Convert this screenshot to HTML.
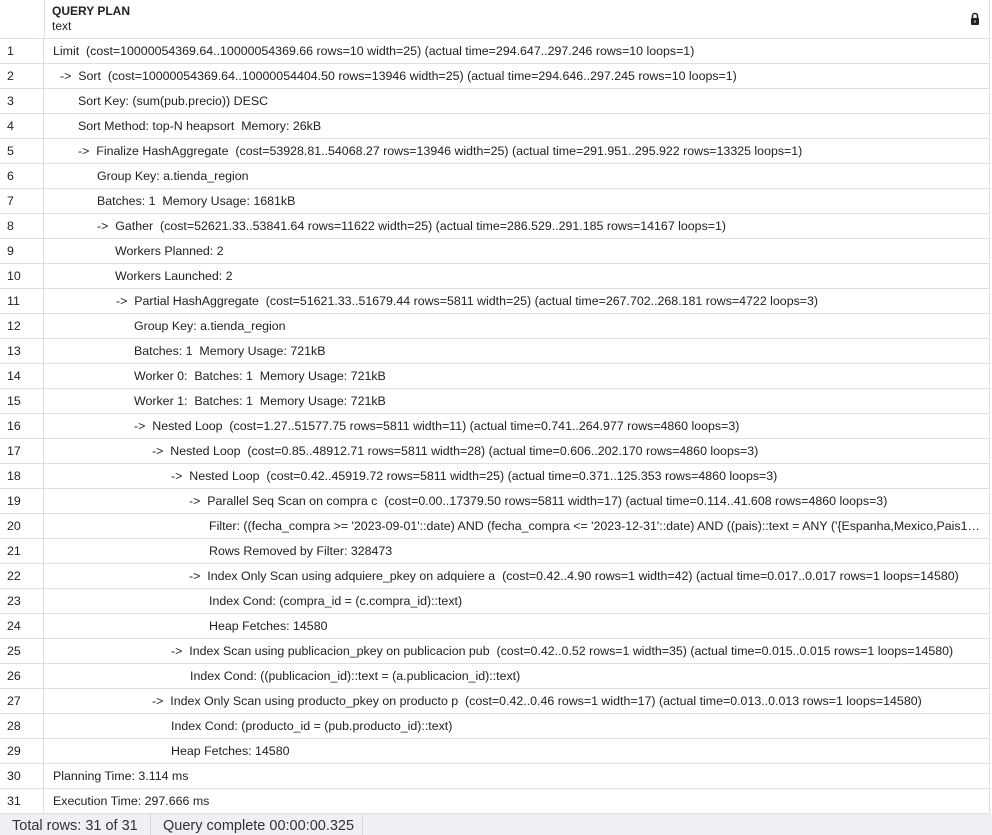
<!DOCTYPE html>
<html><head><meta charset="utf-8"><style>
body{margin:0;width:992px;height:835px;background:#fff;font-family:"Liberation Sans",sans-serif;font-size:12.4px;color:#222;overflow:hidden;position:relative}
.hdr{position:absolute;left:0;top:0;width:989px;height:38px;border-bottom:1px solid #dde0e6;border-right:1px solid #dde0e6}
.hdr .c0{position:absolute;left:0;top:0;width:44px;height:38px;border-right:1px solid #dde0e6}
.hdr .t1{position:absolute;left:52px;top:4px;font-weight:bold;font-size:12px}
.hdr .t2{position:absolute;left:52px;top:19px;font-size:12px}
.row{position:absolute;left:0;width:989px;height:24px;border-bottom:1px solid #dde0e6;border-right:1px solid #dde0e6}
.row .n{position:absolute;left:0;top:0;width:44px;height:25px;border-right:1px solid #dde0e6;box-sizing:border-box;padding-left:7px;line-height:25px}
.row .v{position:absolute;top:0;line-height:25px;white-space:pre;overflow:hidden;text-overflow:ellipsis;right:5px}
.foot{position:absolute;left:0;top:814px;width:992px;height:21px;background:#eef0f4;font-size:14.5px;color:#333}
.foot span{position:absolute;top:4px}
.sep{position:absolute;top:0;width:1px;height:21px;background:#d6d9df}
</style></head><body>
<div class="hdr"><div class="c0"></div><div class="t1">QUERY PLAN</div><div class="t2">text</div>
<svg style="position:absolute;left:970px;top:12px" width="10" height="13" viewBox="0 0 10 13"><path d="M2.5 6V4a2.5 2.5 0 0 1 5 0v2" fill="none" stroke="#222" stroke-width="1.6"/><rect x="1" y="6" width="8" height="7" rx="1" fill="#222"/><rect x="4.4" y="8.5" width="1.2" height="2" fill="#fff"/></svg></div>
<div id="rows"></div>
<div class="foot"><span style="left:12px">Total rows: 31 of 31</span><div class="sep" style="left:150px"></div><span style="left:163px">Query complete 00:00:00.325</span><div class="sep" style="left:362px"></div></div>
<script>
var d=[[53,"Limit  (cost=10000054369.64..10000054369.66 rows=10 width=25) (actual time=294.647..297.246 rows=10 loops=1)"],
[60,"->  Sort  (cost=10000054369.64..10000054404.50 rows=13946 width=25) (actual time=294.646..297.245 rows=10 loops=1)"],
[78,"Sort Key: (sum(pub.precio)) DESC"],
[78,"Sort Method: top-N heapsort  Memory: 26kB"],
[78,"->  Finalize HashAggregate  (cost=53928.81..54068.27 rows=13946 width=25) (actual time=291.951..295.922 rows=13325 loops=1)"],
[97,"Group Key: a.tienda_region"],
[97,"Batches: 1  Memory Usage: 1681kB"],
[97,"->  Gather  (cost=52621.33..53841.64 rows=11622 width=25) (actual time=286.529..291.185 rows=14167 loops=1)"],
[115,"Workers Planned: 2"],
[115,"Workers Launched: 2"],
[116,"->  Partial HashAggregate  (cost=51621.33..51679.44 rows=5811 width=25) (actual time=267.702..268.181 rows=4722 loops=3)"],
[134,"Group Key: a.tienda_region"],
[134,"Batches: 1  Memory Usage: 721kB"],
[134,"Worker 0:  Batches: 1  Memory Usage: 721kB"],
[134,"Worker 1:  Batches: 1  Memory Usage: 721kB"],
[134,"->  Nested Loop  (cost=1.27..51577.75 rows=5811 width=11) (actual time=0.741..264.977 rows=4860 loops=3)"],
[152,"->  Nested Loop  (cost=0.85..48912.71 rows=5811 width=28) (actual time=0.606..202.170 rows=4860 loops=3)"],
[171,"->  Nested Loop  (cost=0.42..45919.72 rows=5811 width=25) (actual time=0.371..125.353 rows=4860 loops=3)"],
[189,"->  Parallel Seq Scan on compra c  (cost=0.00..17379.50 rows=5811 width=17) (actual time=0.114..41.608 rows=4860 loops=3)"],
[209,"Filter: ((fecha_compra >= '2023-09-01'::date) AND (fecha_compra <= '2023-12-31'::date) AND ((pais)::text = ANY ('{Espanha,Mexico,Pais1}'::text[])))"],
[209,"Rows Removed by Filter: 328473"],
[189,"->  Index Only Scan using adquiere_pkey on adquiere a  (cost=0.42..4.90 rows=1 width=42) (actual time=0.017..0.017 rows=1 loops=14580)"],
[209,"Index Cond: (compra_id = (c.compra_id)::text)"],
[209,"Heap Fetches: 14580"],
[171,"->  Index Scan using publicacion_pkey on publicacion pub  (cost=0.42..0.52 rows=1 width=35) (actual time=0.015..0.015 rows=1 loops=14580)"],
[190,"Index Cond: ((publicacion_id)::text = (a.publicacion_id)::text)"],
[152,"->  Index Only Scan using producto_pkey on producto p  (cost=0.42..0.46 rows=1 width=17) (actual time=0.013..0.013 rows=1 loops=14580)"],
[171,"Index Cond: (producto_id = (pub.producto_id)::text)"],
[171,"Heap Fetches: 14580"],
[53,"Planning Time: 3.114 ms"],
[53,"Execution Time: 297.666 ms"]];
var h="";d.forEach(function(r,i){h+='<div class="row" style="top:'+(39+i*25)+'px"><div class="n">'+(i+1)+'</div><div class="v" style="left:'+r[0]+'px">'+r[1].replace(/&/g,"&amp;").replace(/</g,"&lt;").replace(/>/g,"&gt;")+'</div></div>';});
document.getElementById("rows").innerHTML=h;
</script>
</body></html>
